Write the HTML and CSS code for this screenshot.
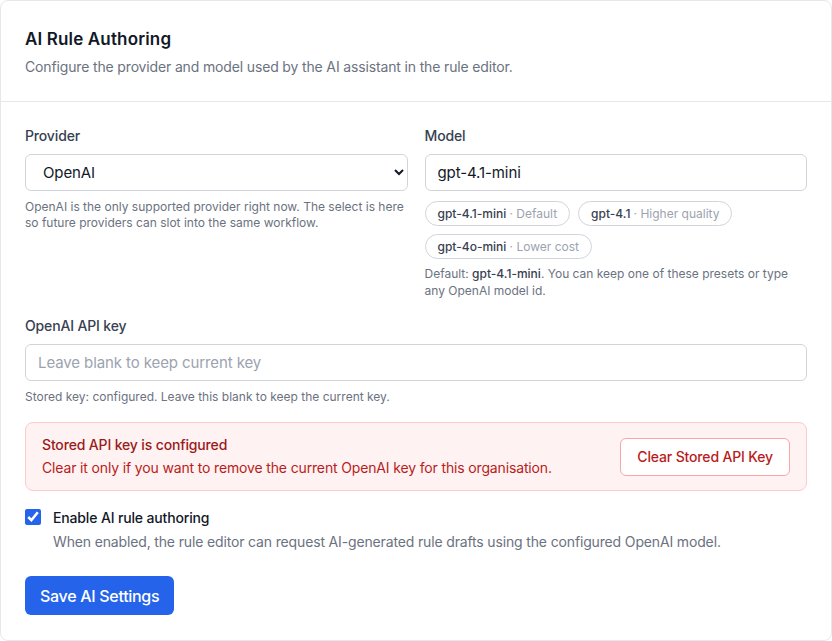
FILE: index.html
```html
<!DOCTYPE html>
<html lang="en">
<head>
    <meta charset="UTF-8">
    <meta name="viewport" content="width=device-width, initial-scale=1.0">
    <title>AI Rule Authoring</title>
    <link rel="stylesheet" href="styles.css">
</head>
<body>
    <div class="card">
        <div class="card-header">
            <h2>AI Rule Authoring</h2>
            <p>Configure the provider and model used by the AI assistant in the rule editor.</p>
        </div>

        <form class="card-body">
            <div class="row">
                <div class="field">
                    <label for="provider">Provider</label>
                    <select id="provider" class="control select">
                        <option value="openai">OpenAI</option>
                    </select>
                    <p class="help">OpenAI is the only supported provider right now. The select is here so future providers can slot into the same workflow.</p>
                </div>
                <div class="field">
                    <label for="model">Model</label>
                    <input type="text" id="model" class="control" value="gpt-4.1-mini">
                    <div class="chips">
                        <button type="button" class="chip">gpt-4.1-mini <span>· Default</span></button>
                        <button type="button" class="chip">gpt-4.1 <span>· Higher quality</span></button>
                        <button type="button" class="chip">gpt-4o-mini <span>· Lower cost</span></button>
                    </div>
                    <p class="help">Default: <strong>gpt-4.1-mini</strong>. You can keep one of these presets or type any OpenAI model id.</p>
                </div>
            </div>

            <div class="field key-field">
                <label for="apiKey">OpenAI API key</label>
                <input type="password" id="apiKey" class="control" placeholder="Leave blank to keep current key">
                <p class="help">Stored key: configured. Leave this blank to keep the current key.</p>
            </div>

            <div class="alert">
                <div>
                    <div class="alert-title">Stored API key is configured</div>
                    <div class="alert-text">Clear it only if you want to remove the current OpenAI key for this organisation.</div>
                </div>
                <button type="button" class="btn-danger">Clear Stored API Key</button>
            </div>

            <div class="check">
                <input type="checkbox" id="enabled" checked>
                <div>
                    <label for="enabled">Enable AI rule authoring</label>
                    <p>When enabled, the rule editor can request AI-generated rule drafts using the configured OpenAI model.</p>
                </div>
            </div>

            <div>
                <button type="submit" class="btn-primary">Save AI Settings</button>
            </div>
        </form>
    </div>
</body>
</html>
```

FILE: styles.css
```css
* {
    box-sizing: border-box;
}
body {
    margin: 0;
    font-family: Inter, "Noto Sans", sans-serif;
    color: #111827;
    background: #fff;
}
.card {
    height: 641px;
    border: 1px solid #e5e7eb;
    border-radius: 8px;
    background: #fff;
}
.card-header {
    padding: 27px 24px 24px;
    border-bottom: 1px solid #e5e7eb;
}
.card-header h2 {
    margin: 0;
    font-size: 17px;
    font-weight: 600;
    line-height: 22px;
    letter-spacing: 0.15px;
}
.card-header p {
    margin: 7px 0 0;
    font-size: 14px;
    line-height: 20px;
    letter-spacing: -0.15px;
    color: #6b7280;
}
.card-body {
    padding: 24px 24px 24px;
    display: flex;
    flex-direction: column;
    gap: 16px;
}
.row {
    display: grid;
    grid-template-columns: 1fr 1fr;
    gap: 17px;
}
.field label {
    display: block;
    font-size: 14px;
    font-weight: 500;
    line-height: 20px;
    letter-spacing: -0.15px;
    color: #374151;
    margin-bottom: 8px;
}
.key-field {
    margin-top: 1px;
}
.control {
    display: block;
    width: 100%;
    height: 37px;
    padding: 0 12px;
    font: inherit;
    font-size: 15px;
    letter-spacing: -0.1px;
    color: #111827;
    background: #fff;
    border: 1px solid #d1d5db;
    border-radius: 6px;
}
.control::placeholder {
    color: #9ca3af;
}
.select {
    padding-left: 13px;
}
.help {
    margin: 8px 0 0;
    font-size: 12px;
    line-height: 16px;
    color: #6b7280;
}
.help strong {
    font-weight: 500;
    color: #374151;
}
.chips {
    display: flex;
    flex-wrap: wrap;
    gap: 8px;
    margin-top: 10px;
}
.chip {
    height: 25px;
    padding: 0 12px;
    font: inherit;
    font-size: 12px;
    font-weight: 500;
    color: #374151;
    background: #fff;
    border: 1px solid #d1d5db;
    border-radius: 999px;
}
.chip span {
    font-weight: 400;
    color: #9ca3af;
}
.chips + .help {
    margin-top: 6px;
    line-height: 17px;
}
.alert {
    display: flex;
    align-items: center;
    justify-content: space-between;
    margin-top: 1px;
    padding: 12px 16px;
    background: #fef2f2;
    border: 1px solid #fecaca;
    border-radius: 8px;
    letter-spacing: -0.15px;
}
.alert-title {
    font-size: 14px;
    font-weight: 500;
    line-height: 20px;
    color: #991b1b;
}
.alert-text {
    margin-top: 3px;
    font-size: 14px;
    line-height: 20px;
    color: #b91c1c;
}
.btn-danger {
    height: 38px;
    padding: 0 16px;
    font: inherit;
    font-size: 14px;
    font-weight: 500;
    letter-spacing: -0.15px;
    color: #b91c1c;
    background: #fff;
    border: 1px solid #fca5a5;
    border-radius: 6px;
}
.check {
    display: flex;
    gap: 12px;
    letter-spacing: -0.15px;
}
.check input {
    width: 16px;
    height: 16px;
    margin: 2px 0 0;
    accent-color: #2563eb;
}
.check label {
    font-size: 14px;
    font-weight: 500;
    line-height: 20px;
    color: #111827;
}
.check p {
    margin: 4px 0 0;
    font-size: 14px;
    line-height: 20px;
    color: #6b7280;
}
.btn-primary {
    height: 39px;
    margin-top: 8px;
    padding: 0 15px;
    font: inherit;
    font-size: 16px;
    font-weight: 500;
    letter-spacing: -0.3px;
    color: #fff;
    background: #2563eb;
    border: none;
    border-radius: 6px;
}
```
